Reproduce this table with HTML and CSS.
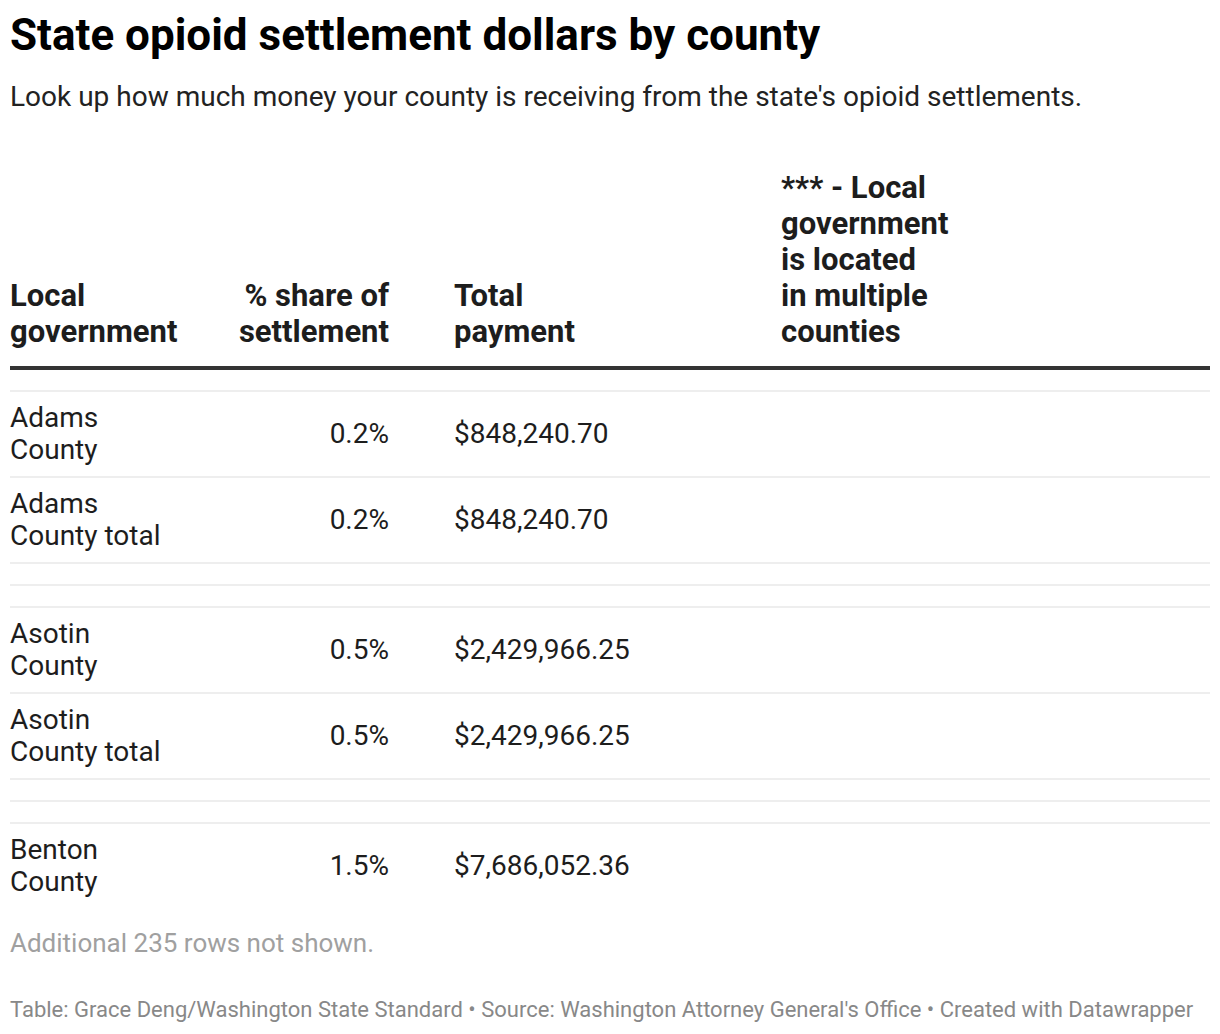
FILE: index.html
```html
<!DOCTYPE html>
<html lang="en">
<head>
<meta charset="utf-8">
<title>State opioid settlement dollars by county</title>
<link rel="stylesheet" href="styles.css">
</head>
<body>
<div class="chart">
  <h1 class="title">State opioid settlement dollars by county</h1>
  <p class="desc">Look up how much money your county is receiving from the state's opioid settlements.</p>
  <table class="tbl">
    <colgroup>
      <col class="c1"><col class="c2"><col class="c3"><col class="c4">
    </colgroup>
    <thead>
      <tr>
        <th class="left">Local government</th>
        <th class="right">% share of settlement</th>
        <th class="pay"><span class="hd-pay">Total payment</span></th>
        <th class="note">*** - Local<br>government<br>is located<br>in multiple<br>counties</th>
      </tr>
    </thead>
    <tbody>
      <tr class="empty"><td></td><td></td><td></td><td></td></tr>
      <tr><td class="left name">Adams County</td><td class="right">0.2%</td><td class="pay">$848,240.70</td><td></td></tr>
      <tr><td class="left name">Adams County total</td><td class="right">0.2%</td><td class="pay">$848,240.70</td><td></td></tr>
      <tr class="empty"><td></td><td></td><td></td><td></td></tr>
      <tr class="empty"><td></td><td></td><td></td><td></td></tr>
      <tr><td class="left name">Asotin County</td><td class="right">0.5%</td><td class="pay">$2,429,966.25</td><td></td></tr>
      <tr><td class="left name">Asotin County total</td><td class="right">0.5%</td><td class="pay">$2,429,966.25</td><td></td></tr>
      <tr class="empty"><td></td><td></td><td></td><td></td></tr>
      <tr class="empty"><td></td><td></td><td></td><td></td></tr>
      <tr class="last"><td class="left name">Benton County</td><td class="right">1.5%</td><td class="pay">$7,686,052.36</td><td></td></tr>
    </tbody>
  </table>
  <p class="more">Additional 235 rows not shown.</p>
  <p class="footer">Table: Grace Deng/Washington State Standard • Source: Washington Attorney General's Office • Created with Datawrapper</p>
</div>
</body>
</html>
```

FILE: styles.css
```css
html, body {
  margin: 0;
  padding: 0;
  background: #ffffff;
}
body {
  font-family: Roboto, "Liberation Sans", sans-serif;
  color: #1d1d1d;
}
.chart {
  padding: 10px 10px 0 10px;
}
.title {
  margin: 0;
  font-size: 44px;
  line-height: 50px;
  font-weight: 700;
  color: #000;
}
.desc {
  margin: 20px 0 0 0;
  font-size: 28px;
  line-height: 34px;
  color: #222;
}
.tbl {
  width: 100%;
  border-collapse: collapse;
  table-layout: fixed;
  margin-top: 56px;
}
.c1 { width: 195px; }
.c2 { width: 184px; }
.c3 { width: 392px; }
.c4 { width: auto; }
th {
  font-weight: 700;
  font-size: 31px;
  line-height: 36px;
  vertical-align: bottom;
  padding: 0 0 16px 0;
  border-bottom: 4px solid #333;
  color: #1d1d1d;
}
td {
  font-size: 28px;
  line-height: 32px;
  vertical-align: middle;
  padding: 10px 0;
  border-bottom: 2px solid #eeeeee;
  color: #1d1d1d;
}
.left { text-align: left; padding-right: 25px; }
.right { text-align: right; }
.pay { text-align: left; padding-left: 65px; }
.hd-pay { display: block; max-width: 150px; }
.note { text-align: left; }
tr.empty td { padding: 0; height: 20px; }
tr.last td { border-bottom: none; }
.more {
  margin: 19px 0 0 0;
  font-size: 26px;
  line-height: 32px;
  color: #a0a0a0;
}
.footer {
  margin: 37px 0 0 0;
  font-size: 22px;
  line-height: 28px;
  color: #888888;
}
```
